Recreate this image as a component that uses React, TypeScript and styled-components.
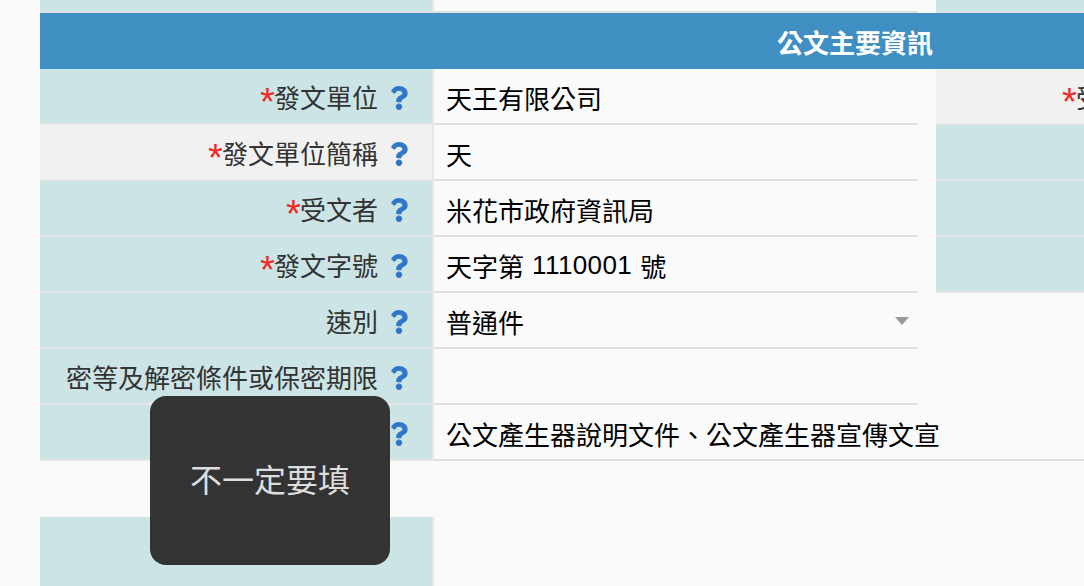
import { createGlobalStyle } from "styled-components";
import styled from "styled-components";
import { FaQuestion } from "react-icons/fa";

const GlobalStyle = createGlobalStyle`
  html, body {
    margin: 0;
    padding: 0;
    background-color: #fafafa;
    overflow: hidden;
  }
  * {
    box-sizing: border-box;
  }
`

const Page = styled.div`
  position: relative;
  width: 1084px;
  height: 586px;
  padding-left: 40px;
  overflow: hidden;
  font-family: "Liberation Sans", "Noto Sans CJK TC", sans-serif;
  font-size: 26px;
`

const Sheet = styled.div`
  width: 1630px;
`

const Columns = styled.div`
  display: flex;
  column-gap: 18px;
`

const Column = styled.div`
  width: 878px;
  flex-shrink: 0;
`

const SideColumn = styled.div`
  width: 734px;
  flex-shrink: 0;
`

const Row = styled.div`
  display: grid;
  grid-template-columns: 394px 484px;
`

const Label = styled.div<{ $tone?: "teal" | "gray"; $last?: boolean }>`
  height: ${({ $last }) => ($last ? 69 : 56)}px;
  display: flex;
  align-items: center;
  justify-content: flex-end;
  padding-right: 23px;
  column-gap: 11px;
  color: #333;
  background-color: ${({ $tone }) => ($tone === "gray" ? "#f1f1f1" : "#cce4e5")};
  border-bottom: ${({ $last }) => ($last ? "0" : "2px solid #e6e6e6")};
  border-right: 2px solid #e6e6e6;
  white-space: nowrap;
`

const LabelText = styled.span`
  display: block;
  line-height: 38px;
  padding-top: 6px;
`

const Required = styled.span`
  display: inline-block;
  width: 14px;
  color: #ee2b24;
  font-size: 38px;
  line-height: 0;
  vertical-align: -7px;
  text-align: center;
`

const Help = styled(FaQuestion)`
  width: 20px;
  height: 24px;
  margin-top: 4px;
  color: #2f77c9;
  flex-shrink: 0;
`

const Value = styled.div<{ $plain?: boolean; $wide?: boolean }>`
  position: relative;
  height: 56px;
  width: ${({ $wide }) => ($wide ? "1236px" : "auto")};
  display: flex;
  align-items: center;
  padding: 2px 0 0 12px;
  color: #000;
  white-space: nowrap;
  border-bottom: ${({ $plain }) => ($plain ? "0" : "2px solid #e0e0e0")};
`

const Digits = styled.span`
  margin: 0 8px;
  letter-spacing: 0.4px;
`

const Caret = styled.span`
  position: absolute;
  right: 9px;
  top: 24px;
  width: 0;
  height: 0;
  border-left: 7px solid transparent;
  border-right: 7px solid transparent;
  border-top: 8px solid #999;
`

const TopStrip = styled.div`
  height: 13px;
  display: flex;
  column-gap: 18px;
`

const TopCell = styled.div<{ $w: number; $teal?: boolean }>`
  width: ${({ $w }) => $w}px;
  flex-shrink: 0;
  background-color: ${({ $teal }) => ($teal ? "#cce4e5" : "transparent")};
  border-bottom: 2px solid #e0e0e0;
  border-right: ${({ $teal }) => ($teal ? "2px solid #e6e6e6" : "0")};
`

const TopPair = styled.div`
  display: flex;
`

const Banner = styled.div`
  height: 56px;
  display: flex;
  align-items: center;
  justify-content: center;
  color: #fff;
  font-weight: 700;
  background-color: #3f8fc3;
`

const SideLabel = styled(Label)`
  width: 298px;
  padding-right: 54px;
  border-right: 0;
`

const SideRow = styled.div`
  height: 56px;
  background-color: #cce4e5;
  border-bottom: 2px solid #e6e6e6;
`

const Spacer = styled.div`
  height: 56px;
`

const Tooltip = styled.div`
  position: absolute;
  left: 150px;
  top: 396px;
  width: 240px;
  height: 169px;
  display: flex;
  align-items: center;
  justify-content: center;
  border-radius: 16px;
  background-color: #333;
  color: #ddd;
  font-size: 32px;
  padding-bottom: 6px;
`

const rows = [
  { label: "發文單位", required: true, value: "天王有限公司" },
  { label: "發文單位簡稱", required: true, tone: "gray" as const, value: "天" },
  { label: "受文者", required: true, value: "米花市政府資訊局" },
  {
    label: "發文字號",
    required: true,
    value: (
      <>
        <span>天字第</span>
        <Digits>1110001</Digits>
        <span>號</span>
      </>
    ),
  },
  { label: "速別", value: "普通件", select: true },
  { label: "密等及解密條件或保密期限", value: "" },
  { label: "附件", value: "公文產生器說明文件、公文產生器宣傳文宣", wide: true },
]

export default function App() {
  return (
    <Page>
      <GlobalStyle />
      <Sheet>
        <TopStrip>
          <TopPair>
            <TopCell $w={394} $teal />
            <TopCell $w={484} />
          </TopPair>
          <TopCell $w={734} $teal />
        </TopStrip>
        <Banner>公文主要資訊</Banner>
        <Columns>
          <Column>
            {rows.map((r) => (
              <Row key={r.label}>
                <Label $tone={r.tone}>
                  <LabelText>
                    {r.required && <Required>*</Required>}
                    {r.label}
                  </LabelText>
                  <Help />
                </Label>
                <Value $wide={r.wide}>
                  {r.value}
                  {r.select && <Caret />}
                </Value>
              </Row>
            ))}
            <Spacer />
            <Row>
              <Label $last />
              <Value $plain />
            </Row>
          </Column>
          <SideColumn>
            <SideLabel $tone="gray">
              <LabelText>
                <Required>*</Required>受文日期
              </LabelText>
            </SideLabel>
            <SideRow />
            <SideRow />
            <SideRow />
          </SideColumn>
        </Columns>
      </Sheet>
      <Tooltip>不一定要填</Tooltip>
    </Page>
  )
}
